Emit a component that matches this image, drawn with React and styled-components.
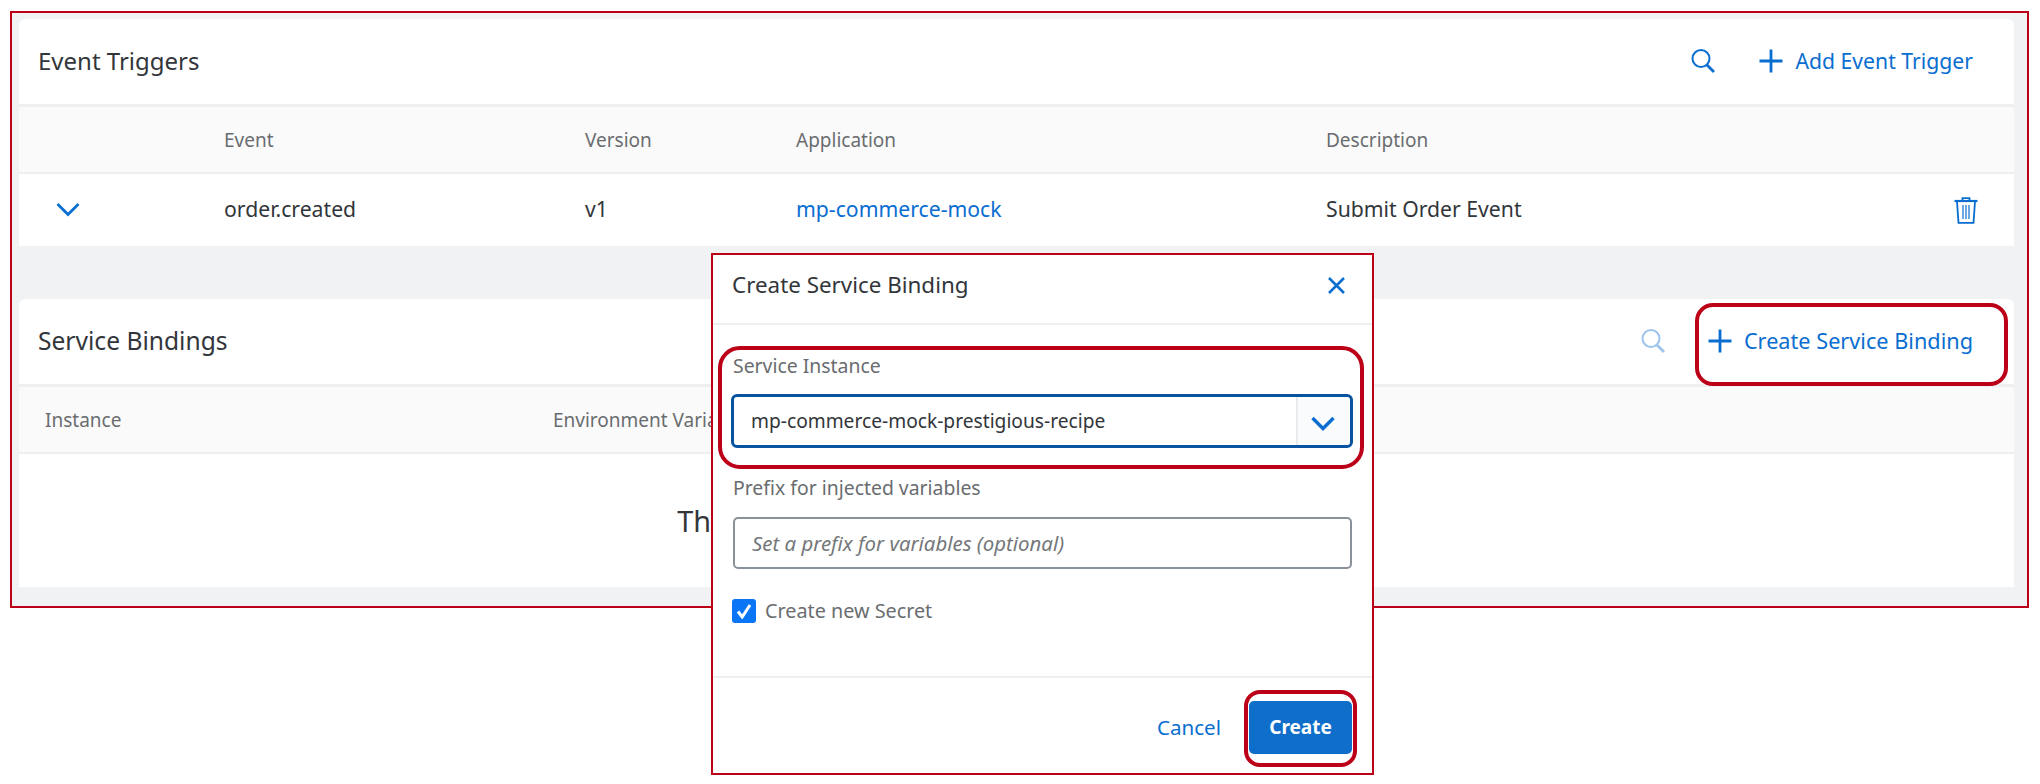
import React from "react";
import styled, { createGlobalStyle } from "styled-components";

const Global = createGlobalStyle`
  html, body { margin: 0; padding: 0; background: #fff; }
  body { font-family: "Noto Sans", "Open Sans", sans-serif; color: #32363a; }
  * { box-sizing: border-box; }
`;

const RED = "#bb0018";
const BLUE = "#0a6ed1";
const COLS = "205px 361px 211px 530px 1fr auto";

const Page = styled.div`
  position: relative;
  width: 2040px;
  height: 784px;
  padding: 11px 11px 0 10px;
  overflow: hidden;
`;
const Frame = styled.div`
  display: flex;
  flex-direction: column;
  gap: 53px;
  height: 597px;
  padding: 6px 13px 18px 7px;
  border: 2px solid ${RED};
  background: #f1f2f3;
`;
const Card = styled.section`
  background: #fff;
  border-radius: 6px 6px 0 0;
  height: ${(p) => p.$height}px;
`;
const CardHeader = styled.header`
  display: flex;
  align-items: center;
  justify-content: space-between;
  height: 88px;
  padding: 0 41px 1px 19px;
  border-bottom: 3px solid #eeeff0;
`;
const CardTitle = styled.h2`
  margin: 0;
  font-size: ${(p) => p.$size}px;
  font-weight: 400;
  line-height: 28px;
  color: #32363a;
`;
const Actions = styled.div`
  display: flex;
  align-items: center;
`;
const SearchButton = styled.span`
  display: flex;
  color: ${BLUE};
  opacity: ${(p) => (p.$dim ? 0.4 : 1)};
  margin-right: ${(p) => p.$gap}px;
`;
const ActionLink = styled.span`
  position: relative;
  display: flex;
  align-items: center;
  gap: 12px;
  font-size: ${(p) => p.$size}px;
  line-height: 28px;
  color: ${BLUE};
  &::after {
    content: ${(p) => (p.$highlight ? '""' : "none")};
    position: absolute;
    left: -13px;
    right: -35px;
    top: -24px;
    bottom: -31px;
    border: 4px solid ${RED};
    border-radius: 18px;
  }
`;
const HeadRow = styled.div`
  display: grid;
  grid-template-columns: ${(p) => p.$cols};
  align-items: center;
  height: 67px;
  padding-left: ${(p) => p.$pad}px;
  background: #fafafa;
  border-bottom: 2px solid #eeeff0;
`;
const HeadCell = styled.span`
  font-size: 19px;
  line-height: 24px;
  color: #6a6d70;
`;
const DataRow = styled.div`
  display: grid;
  grid-template-columns: ${COLS};
  align-items: center;
  height: 72px;
`;
const ExpandCell = styled.span`
  display: flex;
  padding: 0 0 2px 37px;
  color: ${BLUE};
`;
const DataCell = styled.span`
  padding-bottom: 2px;
  font-size: 21.2px;
  line-height: 26px;
  color: ${(p) => (p.$link ? BLUE : "#32363a")};
`;
const DeleteCell = styled.span`
  display: flex;
  padding-right: 36px;
  color: ${BLUE};
`;
const EmptyBody = styled.div`
  display: flex;
  justify-content: center;
  align-items: center;
  height: 133px;
  font-size: 28.8px;
  line-height: 36px;
  white-space: nowrap;
  color: #32363a;
`;

const Modal = styled.div`
  position: absolute;
  left: 711px;
  top: 253px;
  width: 663px;
  height: 522px;
  display: flex;
  flex-direction: column;
  background: #fff;
  border: 2px solid ${RED};
`;
const ModalHeader = styled.header`
  display: flex;
  align-items: center;
  justify-content: space-between;
  height: 70px;
  padding: 0 27px 8px 19px;
  border-bottom: 2px solid #eeeff0;
`;
const ModalTitle = styled.h3`
  margin: 0;
  font-size: 22.4px;
  font-weight: 400;
  line-height: 28px;
  color: #32363a;
`;
const CloseButton = styled.span`
  display: flex;
  color: ${BLUE};
`;
const ModalBody = styled.div`
  flex: 1;
  display: flex;
  flex-direction: column;
  padding: 29px 19px 0 18px;
`;
const HighlightedField = styled.div`
  position: relative;
  &::after {
    content: "";
    position: absolute;
    left: -13px;
    right: -11px;
    top: -8px;
    bottom: -21px;
    border: 4px solid ${RED};
    border-radius: 22px;
    pointer-events: none;
  }
`;
const FieldLabel = styled.label`
  display: block;
  margin: 0 0 ${(p) => p.$after}px 2px;
  font-size: 19.4px;
  line-height: 24px;
  color: #6a6d70;
`;
const SelectBox = styled.div`
  display: flex;
  align-items: stretch;
  height: 54px;
  border: 3px solid #0854a0;
  border-radius: 6px;
`;
const SelectValue = styled.span`
  flex: 1;
  display: flex;
  align-items: center;
  padding: 0 0 2px 17px;
  font-size: 19.2px;
  color: #32363a;
`;
const SelectToggle = styled.span`
  display: flex;
  align-items: center;
  justify-content: center;
  width: 54px;
  padding: 5px 2px 0 0;
  color: ${BLUE};
  background: #fafbfc;
  border-left: 2px solid #e8eaec;
  border-radius: 0 4px 4px 0;
`;
const ThickChevron = styled.span`
  display: flex;
  & path { stroke-width: 3.4; }
`;
const PrefixField = styled.div`
  margin-top: 28px;
`;
const TextInput = styled.div`
  display: flex;
  align-items: center;
  height: 52px;
  margin: 0 1px 0 2px;
  padding-left: 17px;
  border: 2px solid #89919a;
  border-radius: 5px;
  font-size: 20.4px;
  font-style: italic;
  color: #74777a;
`;
const CheckRow = styled.div`
  display: flex;
  align-items: center;
  gap: 9px;
  margin: 30px 0 0 1px;
`;
const CheckBox = styled.span`
  display: flex;
  align-items: center;
  justify-content: center;
  width: 24px;
  height: 24px;
  border-radius: 3px;
  background: #0a76f6;
  color: #fff;
`;
const CheckLabel = styled.span`
  font-size: 19.8px;
  line-height: 24px;
  color: #6a6d70;
`;
const ModalFooter = styled.footer`
  display: flex;
  align-items: center;
  justify-content: flex-end;
  gap: 28px;
  height: 97px;
  padding: 3px 20px 0 0;
  border-top: 2px solid #eeeff0;
`;
const CancelButton = styled.span`
  font-size: 20.6px;
  line-height: 24px;
  color: ${BLUE};
`;
const CreateButton = styled.span`
  position: relative;
  display: flex;
  align-items: center;
  justify-content: center;
  width: 103px;
  height: 53px;
  background: #106ecb;
  border-radius: 5px;
  color: #fff;
  font-size: 19px;
  font-weight: 700;
  &::after {
    content: "";
    position: absolute;
    left: -5px;
    right: -5px;
    top: -11px;
    bottom: -13px;
    border: 4px solid ${RED};
    border-radius: 16px;
  }
`;

const Search = () => (
  <svg width="24" height="24" viewBox="0 0 24 24" fill="none" stroke="currentColor" strokeWidth="2">
    <circle cx="10" cy="9.5" r="8.5" />
    <path d="M15.5 15.5 L23 23" strokeWidth="2.8" />
  </svg>
);
const Plus = () => (
  <svg width="24" height="24" viewBox="0 0 24 24" fill="none" stroke="currentColor" strokeWidth="2.8">
    <path d="M12 0.5V23.5M0.5 12H23.5" />
  </svg>
);
const Chevron = () => (
  <svg width="24" height="15" viewBox="0 0 24 15" fill="none" stroke="currentColor" strokeWidth="2.8">
    <path d="M1.5 2 L12 12.5 L22.5 2" />
  </svg>
);
const Close = () => (
  <svg width="17" height="17" viewBox="0 0 17 17" fill="none" stroke="currentColor" strokeWidth="2.6">
    <path d="M1 1 L16 16 M16 1 L1 16" />
  </svg>
);
const Trash = () => (
  <svg width="24" height="27" viewBox="0 0 24 27" fill="none" stroke="currentColor" strokeWidth="1.8">
    <path d="M0.5 4 H23.5" strokeWidth="2.2" />
    <path d="M8.5 3.5 V1.2 H15.5 V3.5" />
    <path d="M3 4.5 L4.5 25.8 H19.5 L21 4.5" />
    <path d="M9 8 V22 M12 8 V22 M15 8 V22" strokeWidth="1.2" />
  </svg>
);
const Tick = () => (
  <svg width="16" height="16" viewBox="0 0 16 16" fill="none" stroke="currentColor" strokeWidth="3">
    <path d="M2 8.5 L6.2 14 L14 2" />
  </svg>
);

export default function App() {
  return (
    <Page>
      <Global />
      <Frame>
        <Card $height={227}>
          <CardHeader>
            <CardTitle $size={24}>Event Triggers</CardTitle>
            <Actions>
              <SearchButton $gap={44}><Search /></SearchButton>
              <ActionLink $size={21.2}><Plus />Add Event Trigger</ActionLink>
            </Actions>
          </CardHeader>
          <HeadRow $cols={COLS} $pad={0}>
            <span />
            <HeadCell>Event</HeadCell>
            <HeadCell>Version</HeadCell>
            <HeadCell>Application</HeadCell>
            <HeadCell>Description</HeadCell>
          </HeadRow>
          <DataRow>
            <ExpandCell><Chevron /></ExpandCell>
            <DataCell>order.created</DataCell>
            <DataCell>v1</DataCell>
            <DataCell $link>mp-commerce-mock</DataCell>
            <DataCell>Submit Order Event</DataCell>
            <DeleteCell><Trash /></DeleteCell>
          </DataRow>
        </Card>
        <Card $height={288}>
          <CardHeader>
            <CardTitle $size={24.6}>Service Bindings</CardTitle>
            <Actions>
              <SearchButton $dim $gap={43}><Search /></SearchButton>
              <ActionLink $highlight $size={21.7}><Plus />Create Service Binding</ActionLink>
            </Actions>
          </CardHeader>
          <HeadRow $cols="508px 1fr" $pad={26}>
            <HeadCell>Instance</HeadCell>
            <HeadCell>Environment Variables Prefix</HeadCell>
          </HeadRow>
          <EmptyBody>There are no Service Bindings for this Function yet</EmptyBody>
        </Card>
      </Frame>
      <Modal>
        <ModalHeader>
          <ModalTitle>Create Service Binding</ModalTitle>
          <CloseButton><Close /></CloseButton>
        </ModalHeader>
        <ModalBody>
          <HighlightedField>
            <FieldLabel $after={16}>Service Instance</FieldLabel>
            <SelectBox>
              <SelectValue>mp-commerce-mock-prestigious-recipe</SelectValue>
              <SelectToggle><ThickChevron><Chevron /></ThickChevron></SelectToggle>
            </SelectBox>
          </HighlightedField>
          <PrefixField>
            <FieldLabel $after={17}>Prefix for injected variables</FieldLabel>
            <TextInput>Set a prefix for variables (optional)</TextInput>
          </PrefixField>
          <CheckRow>
            <CheckBox><Tick /></CheckBox>
            <CheckLabel>Create new Secret</CheckLabel>
          </CheckRow>
        </ModalBody>
        <ModalFooter>
          <CancelButton>Cancel</CancelButton>
          <CreateButton>Create</CreateButton>
        </ModalFooter>
      </Modal>
    </Page>
  );
}
